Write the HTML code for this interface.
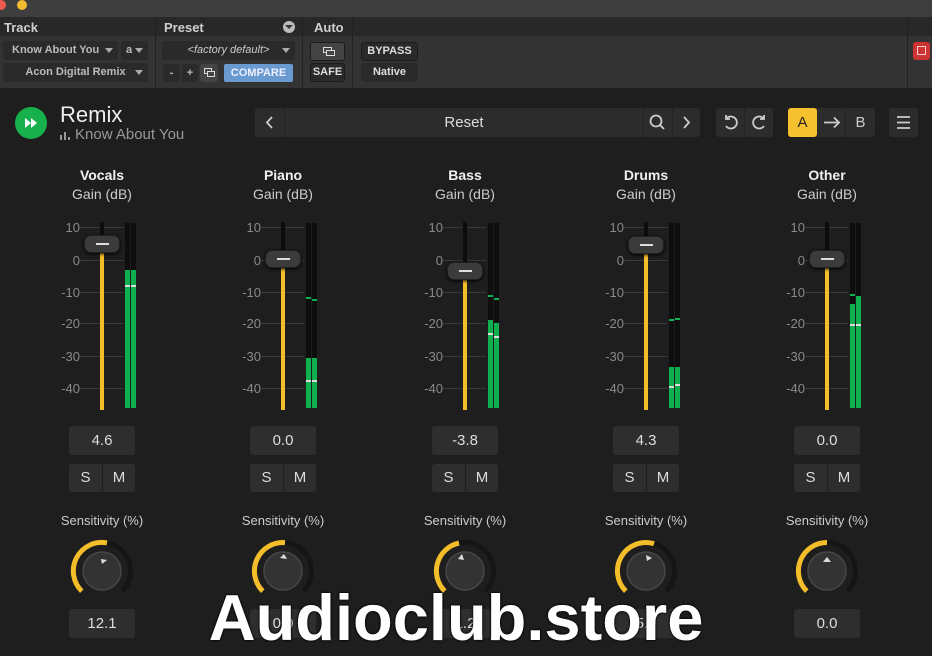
<!DOCTYPE html>
<html><head><meta charset="utf-8"><style>
*{margin:0;padding:0;box-sizing:border-box}
body{width:932px;height:656px;overflow:hidden;background:#1e1e1e;font-family:"Liberation Sans",sans-serif;position:relative;color:#ddd}
.a{position:absolute}
.tb{left:0;top:0;width:932px;height:17px;background:#3e3e3e}
.hd1{left:0;top:17px;width:932px;height:19px;background:#282828}
.hd2{left:0;top:36px;width:932px;height:52px;background:#333}
.ht{font-size:13px;font-weight:bold;color:#cfcfcf;top:20px}
.dv{top:17px;width:1px;height:71px;background:#222}
.dd{background:#2a2a2a;border-radius:3px;font-size:11px;font-weight:bold;color:#bbb;text-align:center;line-height:19px;height:19px}
.dd i{position:absolute;right:5px;top:7px;border:4px solid transparent;border-top:5px solid #aaa;border-bottom:0}
.bt{background:#2a2a2a;border:1px solid #1c1c1c;border-radius:3px;font-size:11px;font-weight:bold;color:#ddd;text-align:center;line-height:17px;height:19px}
.pb{background:#2c2c2c;border-radius:3px;height:29px;top:108px;color:#ccc;text-align:center;line-height:29px;font-size:15px}
.ch{position:absolute;top:0;width:124px;height:656px}
.nm{position:absolute;left:0;width:124px;text-align:center;top:167px;font-size:14px;font-weight:bold;color:#f0f0f0}
.gd{position:absolute;left:0;width:124px;text-align:center;top:186px;font-size:14px;color:#ccc}
.sc{position:absolute;right:84px;font-size:13px;color:#8a8a8a;width:30px;text-align:right}
.tk{position:absolute;left:40px;width:43px;height:1px;background:#3a3a3a}
.tr{position:absolute;left:60px;width:4px;top:222px;height:188px;background:#0c0c0c}
.ye{position:absolute;left:60px;width:4px;background:#f4bd2a;bottom:246px}
.mt{position:absolute;top:223px;width:5px;height:185px;background:#0e0e0e}
.gr{position:absolute;left:0;width:5px;bottom:0;background:#10b050}
.mk{position:absolute;left:0;width:5px;height:2px;background:#ddd}
.pk{position:absolute;left:0;width:5px;height:2px;background:#10b050}
.fk{position:absolute;left:44px;width:36px;height:18px;border-radius:7px;background:#3b3b3b;border:1px solid #222;box-shadow:0 1px 3px #000}
.fk:after{content:"";position:absolute;left:11px;top:7px;width:13px;height:2px;background:#ddd}
.vb{position:absolute;left:29px;width:66px;height:29px;background:#2e2e2e;border-radius:3px;text-align:center;line-height:29px;font-size:15px;color:#ddd}
.sm{position:absolute;left:29px;top:464px;width:66px;height:28px;background:#2e2e2e;border-radius:3px;font-size:15px;color:#ddd}
.sm span{position:absolute;top:0;width:33px;text-align:center;line-height:28px}
.se{position:absolute;left:0;width:124px;text-align:center;top:513px;font-size:13px;color:#ccc}
.kn{position:absolute;left:26px;top:539px}
</style></head><body>
<div class="a tb"></div>
<div class="a" style="left:-4px;top:0;width:10px;height:10px;border-radius:50%;background:#ed5a50"></div>
<div class="a" style="left:17px;top:0;width:10px;height:10px;border-radius:50%;background:#f5bc2f"></div>
<div class="a hd1"></div><div class="a hd2"></div>
<div class="a dv" style="left:155px"></div><div class="a dv" style="left:302px"></div><div class="a dv" style="left:352px"></div><div class="a dv" style="left:907px"></div>
<div class="a ht" style="left:4px">Track</div>
<div class="a ht" style="left:164px">Preset</div>
<div class="a" style="left:283px;top:21px;width:12px;height:12px;border-radius:50%;background:#bbb"><div class="a" style="left:2px;top:4px;border:4px solid transparent;border-top:4px solid #333;border-bottom:0"></div></div>
<div class="a ht" style="left:314px">Auto</div>
<div class="a dd" style="left:3px;top:41px;width:115px;text-align:left;padding-left:9px">Know About You<i></i></div>
<div class="a dd" style="left:121px;top:41px;width:27px;text-align:left;padding-left:5px">a<i></i></div>
<div class="a dd" style="left:3px;top:63px;width:145px">Acon Digital Remix<i></i></div>
<div class="a dd" style="left:162px;top:41px;width:133px;font-style:italic;font-weight:normal;color:#ccc">&lt;factory default&gt;<i></i></div>
<div class="a dd" style="left:163px;top:64px;width:17px;height:18px">-</div>
<div class="a dd" style="left:182px;top:64px;width:16px;height:18px">+</div>
<div class="a dd" style="left:200px;top:64px;width:18px;height:18px;background:#444"><div class="a" style="left:4px;top:4px;width:8px;height:6px;border:1.5px solid #ddd"></div><div class="a" style="left:7px;top:7px;width:8px;height:6px;border:1.5px solid #ddd;background:#444"></div></div>
<div class="a" style="left:224px;top:64px;width:69px;height:18px;background:#6a9bd0;border-radius:2px;font-size:11px;font-weight:bold;color:#eef;text-align:center;line-height:18px">COMPARE</div>
<div class="a bt" style="left:310px;top:42px;width:35px;background:#444"><div class="a" style="left:12px;top:4px;width:9px;height:6px;border:1.5px solid #ddd"></div><div class="a" style="left:15px;top:7px;width:9px;height:6px;border:1.5px solid #ddd;background:#444"></div></div>
<div class="a bt" style="left:310px;top:63px;width:35px">SAFE</div>
<div class="a bt" style="left:361px;top:42px;width:57px">BYPASS</div>
<div class="a bt" style="left:361px;top:63px;width:57px;border-color:#2a2a2a">Native</div>
<div class="a" style="left:913px;top:42px;width:17px;height:18px;background:#c33;border-radius:3px"><div class="a" style="left:4px;top:4px;width:9px;height:9px;border:1.5px solid #fcc"></div></div>

<div class="a" style="left:15px;top:107px;width:32px;height:32px;border-radius:50%;background:#17b04d"></div>
<svg class="a" style="left:15px;top:107px" width="32" height="32"><path d="M10 11l6 5-6 5zM16 11l6 5-6 5z" fill="#fff"/></svg>
<div class="a" style="left:60px;top:102px;font-size:22px;color:#eee">Remix</div>
<svg class="a" style="left:60px;top:129px" width="12" height="12" fill="#999"><rect x="0" y="6" width="2" height="5"/><rect x="4" y="3" width="2" height="8"/><rect x="8" y="8" width="2" height="3"/></svg>
<div class="a" style="left:75px;top:126px;font-size:15px;color:#999">Know About You</div>

<div class="a pb" style="left:255px;width:445px"></div>
<div class="a" style="left:284px;top:108px;width:1px;height:29px;background:#222"></div>
<div class="a" style="left:643px;top:108px;width:1px;height:29px;background:#222"></div>
<div class="a" style="left:672px;top:108px;width:1px;height:29px;background:#222"></div>
<div class="a" style="left:400px;top:108px;width:128px;text-align:center;line-height:29px;font-size:15px;color:#ddd">Reset</div>
<svg class="a" style="left:255px;top:108px" width="446" height="29" fill="none" stroke="#ccc" stroke-width="1.8"><path d="M17 9l-5 5.5 5 5.5"/><circle cx="401" cy="13" r="5.5"/><path d="M405 17l4 4"/><path d="M429 9l5 5.5-5 5.5"/></svg>
<div class="a pb" style="left:716px;width:57px"></div>
<div class="a" style="left:744px;top:108px;width:1px;height:29px;background:#222"></div>
<svg class="a" style="left:716px;top:108px" width="58" height="29" fill="none" stroke="#ccc" stroke-width="1.8"><path d="M10 11a6 6 0 1 1 0 7M10 7v4h4"/><path d="M48 11a6 6 0 1 0 0 7M48 7v4h-4"/></svg>
<div class="a pb" style="left:788px;width:87px"></div>
<div class="a pb" style="left:788px;width:29px;background:#f6c12f;color:#222;font-size:15px">A</div>
<div class="a" style="left:845px;top:108px;width:1px;height:29px;background:#222"></div>
<svg class="a" style="left:817px;top:108px" width="29" height="29" fill="none" stroke="#ccc" stroke-width="1.8"><path d="M7 14.5h15M17 9.5l5 5-5 5"/></svg>
<div class="a pb" style="left:846px;width:29px;background:none">B</div>
<div class="a pb" style="left:889px;width:29px"></div>
<svg class="a" style="left:889px;top:108px" width="29" height="29" stroke="#ccc" stroke-width="1.8"><path d="M8 9h13M8 14.5h13M8 20h13"/></svg>

<div class="ch" style="left:40px">
<div class="nm">Vocals</div><div class="gd">Gain (dB)</div>
<div class="sc" style="top:220px">10</div><div class="sc" style="top:253px">0</div><div class="sc" style="top:285px">-10</div><div class="sc" style="top:316px">-20</div><div class="sc" style="top:349px">-30</div><div class="sc" style="top:381px">-40</div>
<div class="tk" style="top:227px"></div><div class="tk" style="top:260px"></div><div class="tk" style="top:292px"></div><div class="tk" style="top:323px"></div><div class="tk" style="top:356px"></div><div class="tk" style="top:388px"></div>
<div class="tr"></div><div class="ye" style="top:244px;bottom:auto;height:166px"></div>
<div class="mt" style="left:85px"><div class="gr" style="height:138px"></div><div class="mk" style="top:62px"></div></div>
<div class="mt" style="left:91px"><div class="gr" style="height:138px"></div><div class="mk" style="top:62px"></div></div>
<div class="fk" style="top:235px"></div>
<div class="vb" style="top:426px">4.6</div>
<div class="sm"><span style="left:0">S</span><span style="left:33px;border-left:1px solid #1e1e1e">M</span></div>
<div class="se">Sensitivity (%)</div>
<svg class="kn" width="72" height="72"><circle cx="36" cy="32" r="28.5" fill="none" stroke="#151515" stroke-width="5" stroke-dasharray="134 45" transform="rotate(135 36 32)"/><path d="M15.8 52.2A28.5 28.5 0 0 1 41 3.9" fill="none" stroke="#f4bd2a" stroke-width="5"/><circle cx="36" cy="32" r="19" fill="#333" stroke="#474747" stroke-width="1.5"/><path d="M35 20l6 1-5 4z" fill="#ddd"/></svg>
<div class="vb" style="top:609px">12.1</div>
</div>

<div class="ch" style="left:221px">
<div class="nm">Piano</div><div class="gd">Gain (dB)</div>
<div class="sc" style="top:220px">10</div><div class="sc" style="top:253px">0</div><div class="sc" style="top:285px">-10</div><div class="sc" style="top:316px">-20</div><div class="sc" style="top:349px">-30</div><div class="sc" style="top:381px">-40</div>
<div class="tk" style="top:227px"></div><div class="tk" style="top:260px"></div><div class="tk" style="top:292px"></div><div class="tk" style="top:323px"></div><div class="tk" style="top:356px"></div><div class="tk" style="top:388px"></div>
<div class="tr"></div><div class="ye" style="top:259px;bottom:auto;height:151px"></div>
<div class="mt" style="left:85px"><div class="gr" style="height:50px"></div><div class="mk" style="top:157px"></div><div class="pk" style="top:74px"></div></div>
<div class="mt" style="left:91px"><div class="gr" style="height:50px"></div><div class="mk" style="top:157px"></div><div class="pk" style="top:76px"></div></div>
<div class="fk" style="top:250px"></div>
<div class="vb" style="top:426px">0.0</div>
<div class="sm"><span style="left:0">S</span><span style="left:33px;border-left:1px solid #1e1e1e">M</span></div>
<div class="se">Sensitivity (%)</div>
<svg class="kn" width="72" height="72"><circle cx="36" cy="32" r="28.5" fill="none" stroke="#151515" stroke-width="5" stroke-dasharray="134 45" transform="rotate(135 36 32)"/><path d="M15.8 52.2A28.5 28.5 0 0 1 38 3.6" fill="none" stroke="#f4bd2a" stroke-width="5"/><circle cx="36" cy="32" r="19" fill="#333" stroke="#474747" stroke-width="1.5"/><path d="M33 19l4-4 3 5z" fill="#ddd"/></svg>
<div class="vb" style="top:609px">0.0</div>
</div>

<div class="ch" style="left:403px">
<div class="nm">Bass</div><div class="gd">Gain (dB)</div>
<div class="sc" style="top:220px">10</div><div class="sc" style="top:253px">0</div><div class="sc" style="top:285px">-10</div><div class="sc" style="top:316px">-20</div><div class="sc" style="top:349px">-30</div><div class="sc" style="top:381px">-40</div>
<div class="tk" style="top:227px"></div><div class="tk" style="top:260px"></div><div class="tk" style="top:292px"></div><div class="tk" style="top:323px"></div><div class="tk" style="top:356px"></div><div class="tk" style="top:388px"></div>
<div class="tr"></div><div class="ye" style="top:271px;bottom:auto;height:139px"></div>
<div class="mt" style="left:85px"><div class="gr" style="height:88px"></div><div class="mk" style="top:110px"></div><div class="pk" style="top:72px"></div></div>
<div class="mt" style="left:91px"><div class="gr" style="height:85px"></div><div class="mk" style="top:113px"></div><div class="pk" style="top:75px"></div></div>
<div class="fk" style="top:262px"></div>
<div class="vb" style="top:426px">-3.8</div>
<div class="sm"><span style="left:0">S</span><span style="left:33px;border-left:1px solid #1e1e1e">M</span></div>
<div class="se">Sensitivity (%)</div>
<svg class="kn" width="72" height="72"><circle cx="36" cy="32" r="28.5" fill="none" stroke="#151515" stroke-width="5" stroke-dasharray="134 45" transform="rotate(135 36 32)"/><path d="M15.8 52.2A28.5 28.5 0 0 1 30 4.1" fill="none" stroke="#f4bd2a" stroke-width="5"/><circle cx="36" cy="32" r="19" fill="#333" stroke="#474747" stroke-width="1.5"/><path d="M29 20l4-5 2 6z" fill="#ddd"/></svg>
<div class="vb" style="top:609px">1.2</div>
</div>

<div class="ch" style="left:584px">
<div class="nm">Drums</div><div class="gd">Gain (dB)</div>
<div class="sc" style="top:220px">10</div><div class="sc" style="top:253px">0</div><div class="sc" style="top:285px">-10</div><div class="sc" style="top:316px">-20</div><div class="sc" style="top:349px">-30</div><div class="sc" style="top:381px">-40</div>
<div class="tk" style="top:227px"></div><div class="tk" style="top:260px"></div><div class="tk" style="top:292px"></div><div class="tk" style="top:323px"></div><div class="tk" style="top:356px"></div><div class="tk" style="top:388px"></div>
<div class="tr"></div><div class="ye" style="top:245px;bottom:auto;height:165px"></div>
<div class="mt" style="left:85px"><div class="gr" style="height:41px"></div><div class="mk" style="top:163px"></div><div class="pk" style="top:96px"></div></div>
<div class="mt" style="left:91px"><div class="gr" style="height:41px"></div><div class="mk" style="top:161px"></div><div class="pk" style="top:95px"></div></div>
<div class="fk" style="top:236px"></div>
<div class="vb" style="top:426px">4.3</div>
<div class="sm"><span style="left:0">S</span><span style="left:33px;border-left:1px solid #1e1e1e">M</span></div>
<div class="se">Sensitivity (%)</div>
<svg class="kn" width="72" height="72"><circle cx="36" cy="32" r="28.5" fill="none" stroke="#151515" stroke-width="5" stroke-dasharray="134 45" transform="rotate(135 36 32)"/><path d="M15.8 52.2A28.5 28.5 0 0 1 44 4.7" fill="none" stroke="#f4bd2a" stroke-width="5"/><circle cx="36" cy="32" r="19" fill="#333" stroke="#474747" stroke-width="1.5"/><path d="M36 16l6 3-5 3z" fill="#ddd"/></svg>
<div class="vb" style="top:609px">5.9</div>
</div>

<div class="ch" style="left:765px">
<div class="nm">Other</div><div class="gd">Gain (dB)</div>
<div class="sc" style="top:220px">10</div><div class="sc" style="top:253px">0</div><div class="sc" style="top:285px">-10</div><div class="sc" style="top:316px">-20</div><div class="sc" style="top:349px">-30</div><div class="sc" style="top:381px">-40</div>
<div class="tk" style="top:227px"></div><div class="tk" style="top:260px"></div><div class="tk" style="top:292px"></div><div class="tk" style="top:323px"></div><div class="tk" style="top:356px"></div><div class="tk" style="top:388px"></div>
<div class="tr"></div><div class="ye" style="top:259px;bottom:auto;height:151px"></div>
<div class="mt" style="left:85px"><div class="gr" style="height:104px"></div><div class="mk" style="top:101px"></div><div class="pk" style="top:71px"></div></div>
<div class="mt" style="left:91px"><div class="gr" style="height:110px"></div><div class="mk" style="top:101px"></div><div class="pk" style="top:73px"></div></div>
<div class="fk" style="top:250px"></div>
<div class="vb" style="top:426px">0.0</div>
<div class="sm"><span style="left:0">S</span><span style="left:33px;border-left:1px solid #1e1e1e">M</span></div>
<div class="se">Sensitivity (%)</div>
<svg class="kn" width="72" height="72"><circle cx="36" cy="32" r="28.5" fill="none" stroke="#151515" stroke-width="5" stroke-dasharray="134 45" transform="rotate(135 36 32)"/><path d="M15.8 52.2A28.5 28.5 0 0 1 36 3.5" fill="none" stroke="#f4bd2a" stroke-width="5"/><circle cx="36" cy="32" r="19" fill="#333" stroke="#474747" stroke-width="1.5"/><path d="M32 23l4-5 4 5z" fill="#ddd"/></svg>
<div class="vb" style="top:609px">0.0</div>
</div>

<div class="a" style="left:180px;top:582px;width:552px;text-align:center;font-size:65px;font-weight:bold;color:#fff;text-shadow:0 0 2px #000,0 0 2px #000;line-height:72px">Audioclub.store</div>
</body></html>
